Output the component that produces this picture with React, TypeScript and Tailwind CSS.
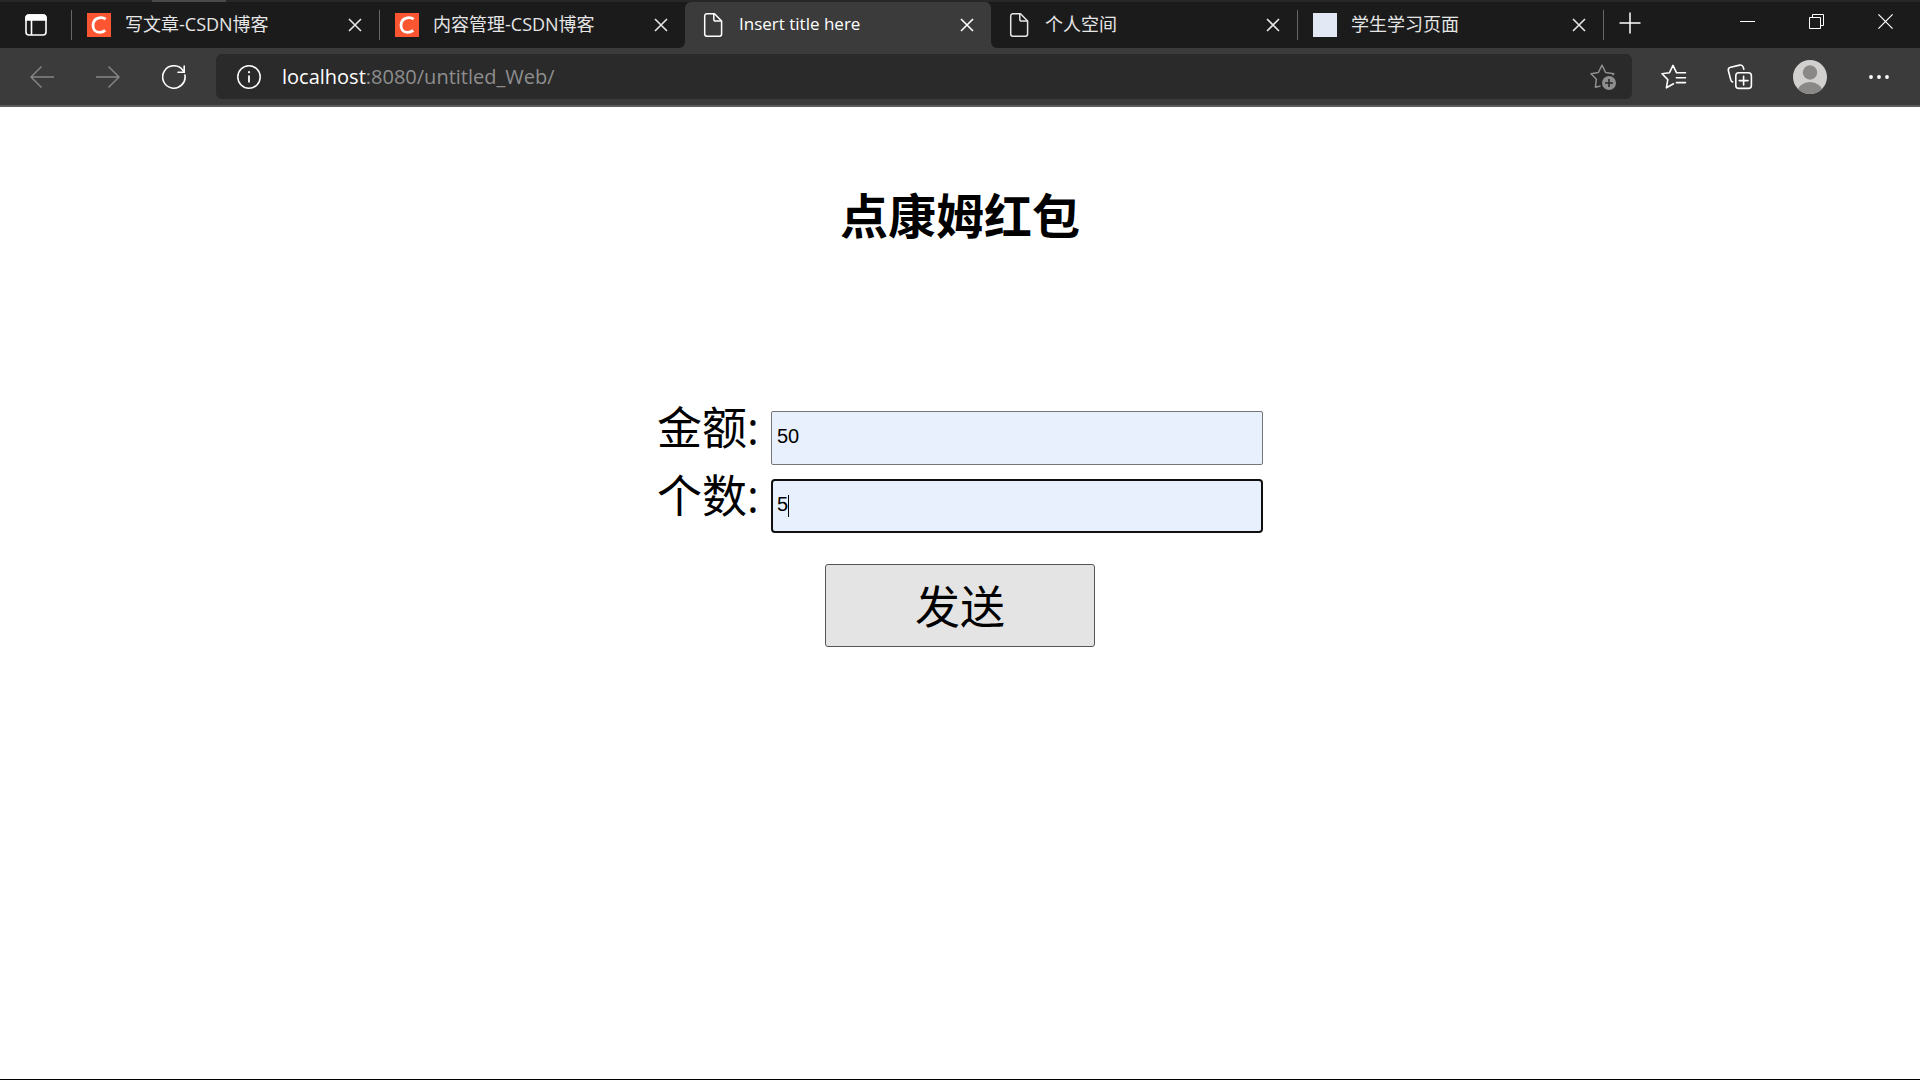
import React, { useState } from 'react';

interface TabInfo {
    title: string;
    icon: 'csdn' | 'file' | 'blank';
    first?: boolean;
    active?: boolean;
    divider?: boolean;
    latin?: boolean;
}

const leftTabs: TabInfo[] = [
    { title: '写文章-CSDN博客', icon: 'csdn', first: true, divider: true },
    { title: '内容管理-CSDN博客', icon: 'csdn', divider: true },
];

const rightTabs: TabInfo[] = [
    { title: '个人空间', icon: 'file' },
    { title: '学生学习页面', icon: 'blank', divider: true },
];

const TabIcon: React.FC<{ icon: TabInfo['icon'] }> = ({ icon }) => {
    if (icon === 'csdn') {
        return (
            <svg viewBox="0 0 24 24" className="size-6 shrink-0" fill="none">
                <rect width="24" height="24" fill="#fc5531" />
                <path d="M18.6 6.2C16.8 4.8 14.6 4.4 12.2 4.9C8.6 5.6 6.2 8.6 6 12.2C5.8 16.4 8.4 19.4 12.4 19.4C14.6 19.4 16.6 18.8 18.2 17.4" stroke="#fff" strokeWidth="2.8" />
            </svg>
        );
    }
    if (icon === 'file') {
        return (
            <svg viewBox="0 0 24 24" className="size-6 shrink-0" fill="none" stroke="currentColor" strokeWidth="1.5" strokeLinejoin="round">
                <path d="M13.5 .8H5.5A2.2 2.2 0 0 0 3.7 3V21A2.2 2.2 0 0 0 5.9 23.2H18.5A2.2 2.2 0 0 0 20.6 21V8Z" />
                <path d="M12.8 .8V6.6A1.5 1.5 0 0 0 14.3 8.1H20.6" />
            </svg>
        );
    }
    return <span className="size-6 shrink-0 bg-[#e3e8f5]"></span>;
};

const Tab: React.FC<{ tab: TabInfo }> = ({ tab }) => (
    <div className={`relative flex h-full items-center pl-4 pr-4 ${tab.first ? 'w-[308px]' : 'w-[306px]'} ${tab.active ? 'text-white' : 'text-[#e6e6e6]'}`}>
        {tab.divider && <span className="absolute left-0 top-2 h-[30px] w-px bg-[#666]"></span>}
        <TabIcon icon={tab.icon} />
        <span className={`ml-[14px] flex-1 truncate pb-0.5 leading-6 ${tab.latin ? 'text-[17px]' : 'text-lg'}`}>{tab.title}</span>
        <button type="button" aria-label="关闭标签页" className="flex size-4 items-center justify-center">
            <svg viewBox="0 0 16 16" className="size-4" stroke="currentColor" strokeWidth="1.6">
                <path d="M2 2L14 14M14 2L2 14" />
            </svg>
        </button>
    </div>
);

const TabStrip: React.FC = () => (
    <div className="relative flex h-12 border-t-2 border-[#272727] bg-[#3b3b3b]">
        <span className="absolute -top-0.5 left-[152px] h-0.5 w-[74px] bg-[#4a4a4a]"></span>
        <div className="flex rounded-br-md bg-[#1b1b1b]">
            <button type="button" aria-label="标签页操作" className="flex w-[71px] items-center justify-center text-white">
                <svg viewBox="0 0 22 22" className="size-[22px]" fill="none" stroke="currentColor" strokeWidth="1.6">
                    <rect x="1" y="1" width="20" height="20" rx="3" />
                    <path d="M1 4A3 3 0 0 1 4 1H18A3 3 0 0 1 21 4V6H1Z" fill="currentColor" />
                    <path d="M6.5 6V21" />
                </svg>
            </button>
            {leftTabs.map((tab) => (
                <Tab key={tab.title} tab={tab} />
            ))}
        </div>
        <div className="bg-[#1b1b1b]">
            <div className="h-full rounded-t-md bg-[#3b3b3b]">
                <Tab tab={{ title: 'Insert title here', icon: 'file', active: true, latin: true }} />
            </div>
        </div>
        <div className="flex flex-1 rounded-bl-md bg-[#1b1b1b] text-white">
            {rightTabs.map((tab) => (
                <Tab key={tab.title} tab={tab} />
            ))}
            <button type="button" aria-label="新建标签页" className="relative flex w-[54px] items-center justify-center pb-1">
                <span className="absolute left-0 top-2 h-[30px] w-px bg-[#666]"></span>
                <svg viewBox="0 0 22 22" className="size-[22px]" stroke="currentColor" strokeWidth="1.5">
                    <path d="M11 .5V21.5M.5 11H21.5" />
                </svg>
            </button>
            <div className="ml-auto flex h-[38px]">
                <button type="button" aria-label="最小化" className="flex w-[69px] items-center justify-center">
                    <svg viewBox="0 0 15 15" className="size-[15px]" stroke="currentColor">
                        <path d="M0 7.5H15" />
                    </svg>
                </button>
                <button type="button" aria-label="还原" className="flex w-[69px] items-center justify-center">
                    <svg viewBox="0 0 15 15" className="size-[15px]" fill="none" stroke="currentColor">
                        <path d="M.5 3.5H11.5V14.5H.5ZM3.5 3.5V.5H14.5V11.5H11.5" />
                    </svg>
                </button>
                <button type="button" aria-label="关闭" className="flex w-[69px] items-center justify-center">
                    <svg viewBox="0 0 15 15" className="size-[15px]" stroke="currentColor" strokeWidth="1.2">
                        <path d="M.4 .4L14.6 14.6M14.6 .4L.4 14.6" />
                    </svg>
                </button>
            </div>
        </div>
    </div>
);

const Toolbar: React.FC = () => (
    <div className="flex h-[59px] items-center border-b-2 border-[#5b5b5b] bg-[#3b3b3b] text-white">
        <div className="flex w-[216px] items-center gap-[42px] pl-[30px]">
            <button type="button" aria-label="后退" className="text-[#858585]">
                <svg viewBox="0 0 24 24" className="size-6" fill="none" stroke="currentColor" strokeWidth="1.5">
                    <path d="M11.5 1.5L1 12L11.5 22.5M1 12H24" />
                </svg>
            </button>
            <button type="button" aria-label="前进" className="text-[#858585]">
                <svg viewBox="0 0 24 24" className="size-6" fill="none" stroke="currentColor" strokeWidth="1.5">
                    <path d="M12.5 1.5L23 12L12.5 22.5M23 12H0" />
                </svg>
            </button>
            <button type="button" aria-label="刷新">
                <svg viewBox="0 0 24 24" className="size-6" fill="none" stroke="currentColor" strokeWidth="1.6" strokeLinecap="round">
                    <path d="M22.9 10A11.2 11.2 0 1 1 20.8 5.2L22 6.8" />
                    <path d="M22.2 1V7.2H16" />
                </svg>
            </button>
        </div>
        <div className="flex h-[45px] flex-1 items-center rounded-md bg-[#2a2a2a] pl-[21px] pr-4">
            <svg viewBox="0 0 24 24" className="size-6 shrink-0" fill="none" stroke="currentColor" strokeWidth="1.5">
                <circle cx="12" cy="12" r="11.2" />
                <path d="M12 10.5V17.5" strokeWidth="1.8" />
                <circle cx="12" cy="7.2" r="1.1" fill="currentColor" stroke="none" />
            </svg>
            <p className="ml-[21px] flex-1 text-xl leading-7 text-[#8e8e8e]">
                <span className="text-white">localhost</span>:8080/untitled_Web/
            </p>
            <button type="button" aria-label="添加到收藏夹" className="text-[#8e8e8e]">
                <svg viewBox="0 0 26 26" className="size-[26px]" fill="none" stroke="currentColor" strokeWidth="1.5" strokeLinejoin="round">
                    <path d="M10.5 22L5.4 23.2L6.4 15.2L1 9.8L8.4 8.5L12 1.2L15.6 8.5L23.8 9.8L22.5 11.3" />
                    <circle cx="19" cy="19" r="7" fill="currentColor" stroke="none" />
                    <path d="M19 15V23M15 19H23" stroke="#2a2a2a" strokeWidth="1.6" />
                </svg>
            </button>
        </div>
        <div className="flex w-72 items-center pl-[29px]">
            <button type="button" aria-label="收藏夹">
                <svg viewBox="0 0 26 26" className="size-[26px]" fill="none" stroke="currentColor" strokeWidth="1.6" strokeLinejoin="round" strokeLinecap="round">
                    <path d="M12.5 19.8L5.4 23.8L6.8 15.6L1 9.8L8.4 8.8L12 1.4L15.6 8.8H24.5" />
                    <path d="M15.4 13.8H24.5M15.4 18.6H24.5" />
                </svg>
            </button>
            <button type="button" aria-label="集锦" className="ml-10">
                <svg viewBox="0 0 26 26" className="size-[26px]" fill="none" stroke="currentColor" strokeWidth="1.6" strokeLinecap="round">
                    <rect x="8.8" y="8.8" width="15.6" height="15.6" rx="3" />
                    <path d="M16.6 12.2V21M12.2 16.6H21" />
                    <path d="M5.6 18C4.4 17.6 4 16.8 3.7 15.6L1.4 6.8C1 5 1.8 3.6 3.6 3.2L12.6 1.1C14.4 .8 15.6 1.4 16.2 3L16.8 5.2" />
                </svg>
            </button>
            <button type="button" aria-label="用户配置" className="ml-10">
                <svg viewBox="0 0 34 34" className="size-[34px]">
                    <clipPath id="avatar">
                        <circle cx="17" cy="17" r="17" />
                    </clipPath>
                    <g clipPath="url(#avatar)">
                        <rect width="34" height="34" fill="#d2d0ce" />
                        <circle cx="17" cy="12.5" r="7.2" fill="#8a8886" />
                        <ellipse cx="17" cy="32" rx="12.5" ry="10" fill="#8a8886" />
                    </g>
                </svg>
            </button>
            <button type="button" aria-label="设置及其他" className="ml-[42px]">
                <svg viewBox="0 0 20 20" className="size-5" fill="currentColor">
                    <circle cx="2" cy="10" r="1.9" />
                    <circle cx="10" cy="10" r="1.9" />
                    <circle cx="18" cy="10" r="1.9" />
                </svg>
            </button>
        </div>
    </div>
);

export default function App() {
    const [amount, setAmount] = useState('50');
    const [count, setCount] = useState('5');

    return (
        <div className="flex min-h-screen flex-col border-b border-black bg-white font-['Open_Sans','Noto_Sans_CJK_SC',sans-serif] text-black">
            <header>
                <TabStrip />
                <Toolbar />
            </header>
            <main className="flex flex-1 flex-col items-center pt-20">
                <h1 className="text-5xl font-bold leading-[58px]">点康姆红包</h1>
                <form className="mt-[150px] flex flex-col items-center" onSubmit={(e) => e.preventDefault()}>
                    <div className="flex h-[68px] items-start">
                        <label htmlFor="amount" className="w-[114px] text-[45px] leading-[66px]">金额:</label>
                        <input
                            id="amount"
                            value={amount}
                            onChange={(e) => setAmount(e.target.value)}
                            className="mt-4 h-[54px] w-[492px] rounded-xs border border-[#767676] bg-[#e8f0fe] px-[5px] pb-[3px] font-['Liberation_Sans',sans-serif] text-xl outline-none"
                        />
                    </div>
                    <div className="relative flex h-[68px] items-start">
                        <label htmlFor="count" className="w-[114px] text-[45px] leading-[66px]">个数:</label>
                        <input
                            id="count"
                            value={count}
                            onChange={(e) => setCount(e.target.value)}
                            className="mt-4 h-[54px] w-[492px] rounded-sm border-2 border-[#101010] bg-[#e8f0fe] px-1 pb-[3px] font-['Liberation_Sans',sans-serif] text-xl caret-transparent outline-none"
                        />
                        {/* text cursor */}
                        <span className="absolute left-[131px] top-8 h-[22px] w-px bg-black"></span>
                    </div>
                    <button type="submit" className="mt-[33px] h-[83px] w-[270px] rounded-[3px] border border-[#555] bg-[#e4e4e4] pt-0.5 text-[45px] leading-[68px]">
                        发送
                    </button>
                </form>
            </main>
        </div>
    );
}
